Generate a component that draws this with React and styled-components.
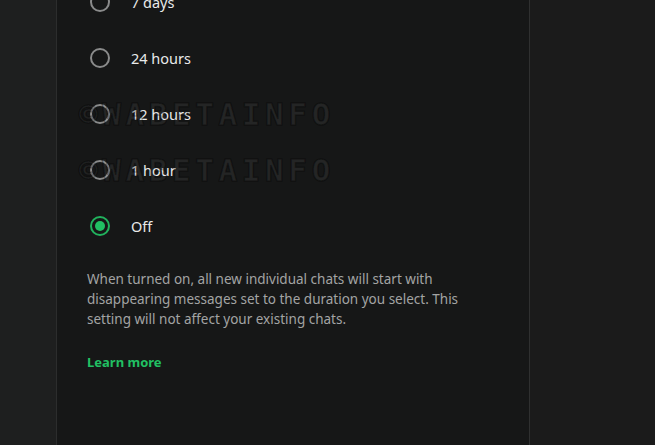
import React from "react";
import styled, { createGlobalStyle } from "styled-components";

const GlobalStyle = createGlobalStyle`
  html, body {
    margin: 0;
    padding: 0;
    background: #1e1f1f;
  }
  #root {
    height: 445px;
  }
`;

const Screen = styled.div`
  display: grid;
  grid-template-columns: 57px 473px 1fr;
  height: 445px;
  overflow: hidden;
  font-family: "Noto Sans", "Open Sans", sans-serif;
`;

const SideRail = styled.div`
  background: #1e1f1f;
  border-right: 1px solid #2c2d2d;
`;

const Panel = styled.div`
  position: relative;
  background: #161717;
  border-right: 1px solid #2f3030;
  overflow: hidden;
  padding: 0 30px;
`;

const Aside = styled.div`
  background: #1b1b1b;
`;

const OptionList = styled.div`
  display: flex;
  flex-direction: column;
  margin-top: -26px;
`;

const OptionRow = styled.label`
  display: flex;
  align-items: center;
  height: 56px;
  gap: 21px;
  cursor: pointer;
`;

const Radio = styled.span`
  box-sizing: border-box;
  width: 20px;
  height: 20px;
  border-radius: 50%;
  margin-left: 3px;
  border: 2px solid ${({ $checked }) => ($checked ? "#21b25d" : "#8a8b8b")};
  display: flex;
  align-items: center;
  justify-content: center;

  &::after {
    content: "";
    width: 10px;
    height: 10px;
    border-radius: 50%;
    background: #21c063;
    display: ${({ $checked }) => ($checked ? "block" : "none")};
  }
`;

const OptionLabel = styled.span`
  color: #e9eaea;
  font-size: 14.5px;
`;

const Description = styled.p`
  margin: 15px 0 0;
  color: #a3a4a4;
  font-size: 13.5px;
  line-height: 20px;
  max-width: 390px;
`;

const LearnMore = styled.a`
  display: inline-block;
  margin-top: 23px;
  color: #21c063;
  font-size: 13px;
  font-weight: 700;
  line-height: 20px;
  text-decoration: none;
`;

const Watermark = styled.div`
  position: absolute;
  left: 22px;
  top: ${({ $top }) => $top}px;
  font-family: "DejaVu Sans Mono", monospace;
  font-weight: 700;
  font-size: 31px;
  letter-spacing: 4.6px;
  line-height: 28px;
  color: rgba(255, 255, 255, 0.06);
  -webkit-text-stroke: 1.5px rgba(0, 0, 0, 0.3);
  pointer-events: none;
  user-select: none;
`;

const options = [
  { label: "7 days" },
  { label: "24 hours" },
  { label: "12 hours" },
  { label: "1 hour" },
  { label: "Off", checked: true },
];

export default function App() {
  return (
    <>
      <GlobalStyle />
      <Screen>
        <SideRail />
        <Panel>
          <OptionList>
            {options.map((o) => (
              <OptionRow key={o.label}>
                <Radio $checked={o.checked} />
                <OptionLabel>{o.label}</OptionLabel>
              </OptionRow>
            ))}
          </OptionList>
          <Description>
            When turned on, all new individual chats will start with
            disappearing messages set to the duration you select. This setting
            will not affect your existing chats.
          </Description>
          <LearnMore href="#">Learn more</LearnMore>
          <Watermark $top={100}>©WABETAINFO</Watermark>
          <Watermark $top={156}>©WABETAINFO</Watermark>
        </Panel>
        <Aside />
      </Screen>
    </>
  );
}
